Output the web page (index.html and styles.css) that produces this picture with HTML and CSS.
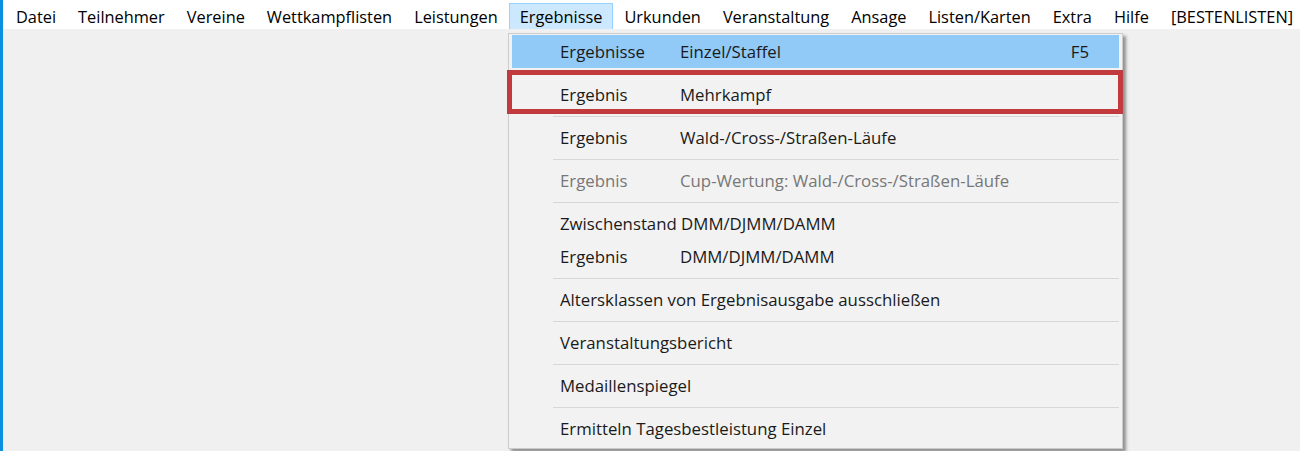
FILE: index.html
```html
<!DOCTYPE html>
<html lang="de">
<head>
    <meta charset="UTF-8">
    <title>Ergebnisse</title>
    <link rel="stylesheet" href="styles.css">
</head>
<body>
    <div class="menubar">
        <span class="menu-item">Datei</span>
        <span class="menu-item">Teilnehmer</span>
        <span class="menu-item">Vereine</span>
        <span class="menu-item">Wettkampflisten</span>
        <span class="menu-item">Leistungen</span>
        <span class="menu-item active">Ergebnisse</span>
        <span class="menu-item">Urkunden</span>
        <span class="menu-item">Veranstaltung</span>
        <span class="menu-item">Ansage</span>
        <span class="menu-item">Listen/Karten</span>
        <span class="menu-item">Extra</span>
        <span class="menu-item">Hilfe</span>
        <span class="menu-item">[BESTENLISTEN]</span>
    </div>

    <div class="dropdown">
        <div class="drop-item selected">
            <span class="col1">Ergebnisse</span><span>Einzel/Staffel</span><span class="key">F5</span>
        </div>
        <div class="separator"></div>
        <div class="drop-item">
            <span class="col1">Ergebnis</span><span>Mehrkampf</span>
        </div>
        <div class="separator"></div>
        <div class="drop-item">
            <span class="col1">Ergebnis</span><span>Wald-/Cross-/Straßen-Läufe</span>
        </div>
        <div class="separator"></div>
        <div class="drop-item disabled">
            <span class="col1">Ergebnis</span><span>Cup-Wertung: Wald-/Cross-/Straßen-Läufe</span>
        </div>
        <div class="separator"></div>
        <div class="drop-item">Zwischenstand DMM/DJMM/DAMM</div>
        <div class="drop-item">
            <span class="col1">Ergebnis</span><span>DMM/DJMM/DAMM</span>
        </div>
        <div class="separator"></div>
        <div class="drop-item">Altersklassen von Ergebnisausgabe ausschließen</div>
        <div class="separator"></div>
        <div class="drop-item">Veranstaltungsbericht</div>
        <div class="separator"></div>
        <div class="drop-item">Medaillenspiegel</div>
        <div class="separator"></div>
        <div class="drop-item">Ermitteln Tagesbestleistung Einzel</div>
    </div>

    <!-- Markierung -->
    <div class="highlight-box"></div>
</body>
</html>
```

FILE: styles.css
```css
body {
    margin: 0;
    height: 451px;
    overflow: hidden;
    font-family: "Open Sans", "Noto Sans", sans-serif;
    font-size: 16.35px;
    color: #000;
    background-color: #f0f0f0;
    border-left: 3px solid #0b8fe0;
    position: relative;
}

.menubar {
    display: flex;
    height: 29px;
    padding-left: 2px;
    background-color: #fff;
}

.menu-item {
    display: flex;
    align-items: center;
    margin-top: 3px;
    padding: 0 10px 0 10px;
    border: 1px solid transparent;
    border-bottom: none;
    white-space: nowrap;
}

.menu-item.active {
    background-color: #cce8ff;
    border-color: #99d1ff;
}

.dropdown {
    position: absolute;
    left: 505px;
    top: 33px;
    width: 607px;
    padding: 1px 3px 3px 3px;
    font-size: 16.8px;
    background-color: #f2f2f2;
    border: 1px solid #cccccc;
    box-shadow: 3px 3px 3px rgba(0, 0, 0, 0.4);
}

.drop-item {
    display: flex;
    align-items: center;
    height: 33px;
    padding-left: 48px;
    color: #1a1a1a;
    white-space: nowrap;
}

.drop-item.selected {
    background-color: #91c9f7;
}

.drop-item.disabled {
    color: #777;
}

.col1 {
    width: 120px;
}

.key {
    margin-left: auto;
    padding-right: 30px;
}

.separator {
    height: 1px;
    margin: 5px 0 4px 41px;
    background-color: #d7d7d7;
}

.highlight-box {
    position: absolute;
    left: 504px;
    top: 70px;
    width: 616px;
    height: 44px;
    box-sizing: border-box;
    border: 5px solid #c03a3e;
}
```
